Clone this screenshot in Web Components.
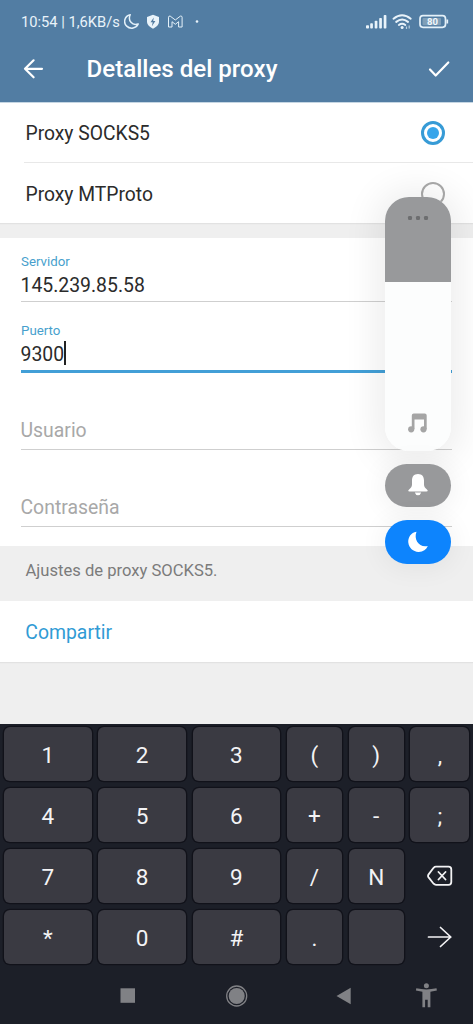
<!DOCTYPE html>
<html lang="es">
<head>
<meta charset="utf-8">
<title>Detalles del proxy</title>
<style>
html,body{margin:0;padding:0;background:#efefef}
body{font-family:Roboto,"Liberation Sans",sans-serif;width:473px;height:1024px;overflow:hidden}
</style>
</head>
<body>
<proxy-screen></proxy-screen>
<script>
const define = (name, css, html) => customElements.define(name, class extends HTMLElement {
  constructor() {
    super();
    const t = document.createElement('template');
    t.innerHTML = `<style>*{box-sizing:border-box}svg{display:block;flex:none}${css}</style>${html}`;
    this.attachShadow({mode: 'open'}).append(t.content.cloneNode(true));
  }
});

define('status-bar', `
:host{display:flex;height:42px;align-items:flex-start;padding:0 24px 0 21px;color:#e9f3fa;font-size:14.7px;line-height:44px;white-space:nowrap}
.clock{width:103px}
.space{flex:1}`, `
<span class="clock">10:54 | 1,6KB/s</span>
<svg width="80" height="42" viewBox="124 0 80 42" fill="none" stroke="#e4f1f9">
<path d="M130.2 14.8C124.6 16 122.9 22.4 126.7 26.1C130.3 29.6 136.3 28.3 138.2 24C132.2 26.1 127.6 20.6 130.2 14.8Z" stroke-width="1.5" stroke-linejoin="round"/>
<path d="M153 14.800l6 2.200v4.600c0 3.200-2.600 5.700-6 7.100c-3.400-1.400-6-3.900-6-7.100v-4.600z" fill="#e9f3fa" stroke="none"/>
<path d="M153.800 17.500l-3.300 4.700h2.200l-.8 4 3.500-5.200h-2.200z" fill="#527ba0" stroke="none"/>
<path d="M168.500 27V17.200q.1-1.500 1.700-1.100L175.300 20l5.100-3.900q1.600-.4 1.700 1.100V27h-3.500v-5.300l-3.300 2.600-3.300-2.600V27z" stroke-width="1"/>
<circle cx="197" cy="21.500" r="1.300" fill="#e9f3fa" stroke="none"/>
</svg>
<span class="space"></span>
<svg width="84" height="42" viewBox="365 0 84 42">
<g fill="#e9f3fa"><rect x="366" y="25.300" width="3" height="3.200" rx=".8"/><rect x="370.200" y="23.200" width="2.700" height="5.300" rx=".8"/><rect x="374.700" y="20.700" width="2.700" height="7.800" rx=".8"/><rect x="379.200" y="18" width="2.700" height="10.500" rx=".8"/><rect x="383.700" y="15" width="2.700" height="13.500" rx=".8"/></g>
<g fill="none" stroke="#e9f3fa" stroke-width="2" stroke-linecap="round"><path d="M393.500 18.700q8.600-7 17.200 0M396.200 21.900q6-4.700 11.800 0M398.900 25q3.200-2.300 6.400 0"/></g><circle cx="402.100" cy="27.500" r="1.500" fill="#e9f3fa"/><path d="M406.500 26.500v2.500M409.200 25.500v3" stroke="#b8cfdf" stroke-width="1.200"/>
<rect x="420" y="15.700" width="25.500" height="11.600" rx="3" fill="none" stroke="#e4f1f9" stroke-width="1.700"/><rect x="422.500" y="18" width="18.500" height="7.200" rx="1" fill="#7f9fb8"/><path d="M447.300 19.500v4" stroke="#e9f3fa" stroke-width="1.700"/>
<text x="432.500" y="25.100" text-anchor="middle" font-size="9.500" font-weight="700" fill="#f2f8fc">80</text>
</svg>`);

define('app-header', `
:host{display:block;height:102px;background:#527da3;box-shadow:0 1px 0 #c5d6e3}
.bar{display:flex;height:60px;padding:0 22px 0 23px}
h1{flex:1;margin:0;padding-left:42.500px;font-size:24.100px;line-height:54.500px;font-weight:500;color:#fff}
svg{margin-top:16px}`, `
<status-bar></status-bar>
<div class="bar">
<svg width="21" height="22" viewBox="0 0 21 22" fill="none" stroke="#fff" stroke-width="2.200" stroke-linecap="round" stroke-linejoin="round"><path d="M2 10.800H19M10.600 2.300L2 10.800l8.600 8.500"/></svg>
<h1><slot></slot></h1>
<svg width="24" height="22" viewBox="427 58 24 22" fill="none" stroke="#fff" stroke-width="2.200" stroke-linecap="round" stroke-linejoin="round"><path d="M430 69.500l5.700 6 12.600-13"/></svg>
</div>`);

define('radio-row', `
:host{display:flex;height:61px;padding:0 28.500px 0 25.500px;align-items:flex-start;background:#fff;color:#2b2b2b}
span{flex:1;font-size:19.300px;line-height:64px}
i{width:24px;height:24px;margin-top:18.500px;border:2.300px solid #aaa;border-radius:50%;display:flex;align-items:center;justify-content:center}
:host([checked]) i{border-color:#379bd6;border-width:3px}
:host([checked]) i::after{content:"";width:12px;height:12px;border-radius:50%;background:#37a5ea}`,
`<span><slot></slot></span><i></i>`);

define('text-field', `
:host{display:flex;flex-direction:column;height:77px;margin:0 21px;border-bottom:1px solid #cfcfcf;color:#2b2b2b;white-space:nowrap}
.label{height:22px;font-size:13.300px;line-height:23.500px;color:#479fcd}
.value{display:flex;font-size:19.400px;line-height:27px;height:25px;margin-left:-.5px}
:host([empty]){color:#a8a8a8;justify-content:flex-end;padding-bottom:7px}
:host([empty]) .label{display:none}
:host([focused]){border-bottom:3px solid #429fd7}
:host([focused]) .value::after{content:"";width:2px;height:24px;background:#222;margin-top:0}`,
`<div class="label"><slot name="label"></slot></div><div class="value"><slot></slot></div>`);

define('volume-panel', `
:host{position:absolute;left:385px;top:197px;width:65.500px;display:flex;flex-direction:column;gap:13px}
.slider{height:253.500px;border-radius:24px;overflow:hidden;background:#fcfdfd;display:flex;flex-direction:column;justify-content:space-between;align-items:center}
.level{width:100%;height:84.500px;background:#98999b;display:flex;justify-content:center;padding-top:18px}
.wrap{border-radius:24px;box-shadow:0 2px 34px 10px #00000012}
.pill{height:43.500px;border-radius:22px;background:#98999b;display:flex;align-items:center;justify-content:center;box-shadow:0 2px 24px 5px #0000000c}
.blue{background:#0d84fd}`, `
<div class="wrap"><div class="slider"><div class="level"><svg width="22" height="6" fill="#6d6e70"><rect x="1" y="1" width="4" height="4" rx="1.300"/><rect x="9" y="1" width="4" height="4" rx="1.300"/><rect x="17" y="1" width="4" height="4" rx="1.300"/></svg></div>
<svg width="20" height="38" viewBox="408 412 20 38"><path d="M411.800 414.500q0-2 2-2h10.900q2 0 2 2V428h-2.700v-9.500h-9.500V428h-2.700z" fill="#a5a5a5"/><circle cx="411.200" cy="428.300" r="3.100" fill="#a5a5a5"/><circle cx="423.500" cy="428.300" r="3.100" fill="#a5a5a5"/></svg></div></div>
<div class="pill"><svg width="22" height="24" viewBox="0 0 22 24" fill="#fff"><path d="M11 1C6.800 1 5 3.800 5 7.500v4c0 2.500-1.200 3.300-2.700 4.800C.7 18 1 18.500 2.500 18.500h17c1.500 0 1.800-.5.2-2.200-1.500-1.500-2.700-2.300-2.700-4.800v-4C17 3.800 15.200 1 11 1zM7.800 19.500h6.400q-.8 2.700-3.200 2.700t-3.200-2.700z"/></svg></div>
<div class="pill blue"><svg width="22" height="22" viewBox="0 0 22 22" fill="#fff"><path d="M9.500.7C3.900 1.600.8 6.400 1.300 11.600c.6 5.600 5.200 9.500 10.500 9.300 4.300-.2 7.500-2.400 9-6C12.500 17 6.300 8.900 9.500.7z"/></svg></div>`);

define('key-cap', `
:host{display:flex;height:54px;justify-content:center;border-radius:6px;background:#3a3a42;box-shadow:0 0 0 1.300px #11121a;color:#f3f3f5;font-size:22.500px;line-height:56px}
:host([bare]){background:none;box-shadow:none;align-items:center}`, `<slot></slot>`);

define('key-board', `
:host{display:block;height:300px;background:#1c1f28;padding:3px 4px 0}
.grid{display:grid;grid-template-columns:87.500px 87.500px 87.500px 55px 55px 59px;column-gap:6.800px;row-gap:6.900px}
nav{display:flex;height:64px}`, `
<div class="grid">
<key-cap>1</key-cap><key-cap>2</key-cap><key-cap>3</key-cap><key-cap>(</key-cap><key-cap>)</key-cap><key-cap>,</key-cap>
<key-cap>4</key-cap><key-cap>5</key-cap><key-cap>6</key-cap><key-cap>+</key-cap><key-cap>-</key-cap><key-cap>;</key-cap>
<key-cap>7</key-cap><key-cap>8</key-cap><key-cap>9</key-cap><key-cap>/</key-cap><key-cap>N</key-cap>
<key-cap bare><svg width="26" height="22" viewBox="427 865 26 22" fill="none" stroke="#f3f3f5" stroke-width="1.800" stroke-linejoin="round" stroke-linecap="round"><path d="M436 866.700h12.500q2.800 0 2.800 2.800v12.500q0 2.800-2.800 2.800H436q-1.400 0-2.400-1.100l-5-6.300q-1.100-1.500 0-3l5-6.600q1-1.100 2.400-1.100zM438.500 872l7 7.500M445.500 872l-7 7.500"/></svg></key-cap>
<key-cap>*</key-cap><key-cap>0</key-cap><key-cap>#</key-cap><key-cap>.</key-cap><key-cap></key-cap>
<key-cap bare><svg width="26" height="22" viewBox="427 925.500 26 22" fill="none" stroke="#f3f3f5" stroke-width="1.700" stroke-linejoin="round" stroke-linecap="round"><path d="M428.500 936.500h22.300M440.500 927l10.300 9.500-10.300 9.500"/></svg></key-cap>
</div>
<nav><svg width="465" height="60" viewBox="4 964 465 60" fill="#808185"><rect x="120.500" y="988.300" width="14.500" height="14.500"/><circle cx="236.700" cy="996" r="8"/><circle cx="236.700" cy="996" r="10" fill="none" stroke="#808185" stroke-width="1.300"/><path d="M336.500 996l14.200-8.200v16.400z"/><circle cx="426.400" cy="985.800" r="2.500"/><path d="M416.300 988.300q10 2.200 20.200 0l.4 2.200-6.500 1.300v15.500h-2.700v-7.500h-2.600v7.500h-2.700v-15.500l-6.500-1.300z"/></svg></nav>`);

define('proxy-screen', `
:host{display:flex;flex-direction:column;width:473px;height:1024px;position:relative;background:#efefef;overflow:hidden}
app-header{z-index:1}
.sep{height:1px;background:linear-gradient(90deg,#fff 24px,#e8e8e8 24px);flex:none}
.types,.share{box-shadow:0 1px 1px #e2e2e2}
.types{height:121px;margin-bottom:15px}
.types radio-row{height:60px}
.form{height:308px;background:#fff;padding-top:12px}
.host{height:52px}
.port{height:56px;margin-top:15px;padding-top:2px}
.user{height:76.500px}
.note{height:55px;padding-left:25.500px;font-size:16.600px;line-height:50px;color:#7b7b7b}
.share{height:61px;background:#fff;padding-left:25.300px;font-size:19.400px;line-height:64px;color:#309bd5;margin-bottom:62px}`, `
<app-header>Detalles del proxy</app-header>
<div class="types"><radio-row checked>Proxy SOCKS5</radio-row><div class="sep"></div><radio-row>Proxy MTProto</radio-row></div>
<div class="form">
<text-field class="host"><span slot="label">Servidor</span>145.239.85.58</text-field>
<text-field class="port" focused><span slot="label">Puerto</span>9300</text-field>
<text-field class="user" empty>Usuario</text-field>
<text-field empty>Contraseña</text-field>
</div>
<div class="note">Ajustes de proxy SOCKS5.</div>
<div class="share">Compartir</div>
<key-board></key-board>
<volume-panel></volume-panel>`);
</script>
</body>
</html>
